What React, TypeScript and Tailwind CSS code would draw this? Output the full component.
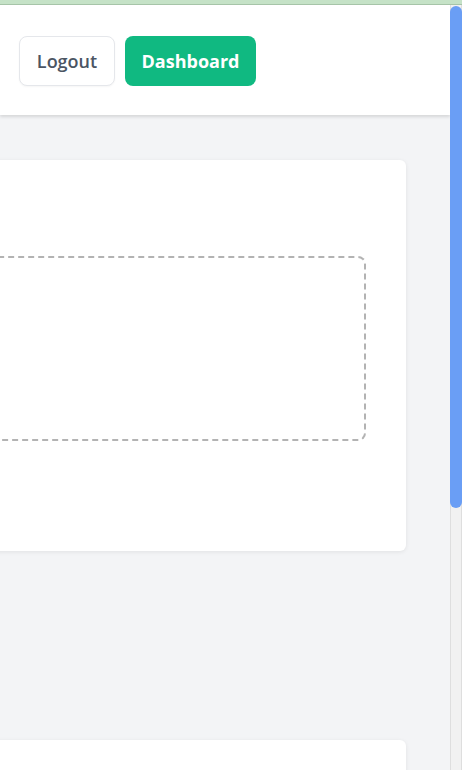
import React from "react";

export default function App() {
  return (
    <div
      className="h-[770px] w-[462px] flex flex-col overflow-hidden bg-[#f3f4f6]"
      style={{ fontFamily: '"Open Sans", "Noto Sans", sans-serif' }}
    >
      <div className="h-[5px] shrink-0 bg-[#c5e2c7] border-b border-[#a6c4a8]" />
      <div className="flex flex-1 min-h-0">
        <div className="flex-1 min-w-0 flex flex-col overflow-hidden">
          <header className="h-[110px] shrink-0 bg-white shadow-[0_2px_3px_rgba(0,0,0,0.12)] flex items-start pt-[31px] pl-[19px] gap-[10px] relative z-10">
            <button className="h-[50px] w-[96px] rounded-lg border border-[#e5e7eb] bg-white text-[18px] font-semibold text-[#4b5563] shadow-[0_1px_2px_rgba(0,0,0,0.04)] flex items-center justify-center">
              Logout
            </button>
            <button className="h-[50px] w-[131px] rounded-lg bg-[#10b981] text-[18px] font-bold text-white flex items-center justify-center">
              Dashboard
            </button>
          </header>
          <main className="flex flex-col pt-[45px] pr-[44px]">
            <section className="-ml-[200px] h-[391px] shrink-0 bg-white rounded-md shadow-[0_1px_4px_rgba(0,0,0,0.08)] pt-[96px] pr-[40px]">
              <div className="-ml-[40px] h-[185px] border-2 border-dashed border-[#b3b3b3] rounded-lg" />
            </section>
            <section className="-ml-[200px] mt-[189px] h-[200px] shrink-0 bg-white rounded-md shadow-[0_1px_4px_rgba(0,0,0,0.08)]" />
          </main>
        </div>
        <div className="w-[12px] shrink-0 bg-[#f1f1f1] border-x border-[#dedede] relative">
          <div className="absolute -left-px -right-px top-px h-[502px] rounded-full bg-[#6a9ef5]" />
        </div>
      </div>
    </div>
  );
}
